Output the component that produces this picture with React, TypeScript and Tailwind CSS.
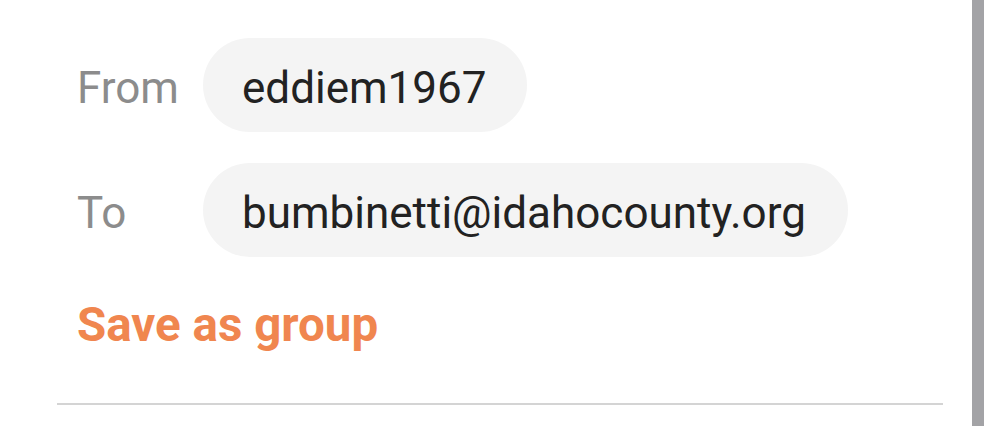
export default function App() {
  return (
    <div className="w-[1000px] h-[426px] bg-white flex overflow-hidden" style={{ fontFamily: 'Roboto, "Noto Sans", sans-serif' }}>
      <div className="w-[972px] flex flex-col pl-[57px] pr-[29px] pt-[38px]">
        <div className="pl-[20px] flex flex-col gap-[31px]">
          <div className="flex items-center">
            <span className="w-[126px] pt-[5px] text-[44px] text-[#8c8c8c]">From</span>
            <div className="h-[94px] rounded-full bg-[#f4f4f4] flex items-center pt-[5px] pl-[39px] pr-[40px] text-[44px] text-[#222222]">
              eddiem1967
            </div>
          </div>
          <div className="flex items-center">
            <span className="w-[126px] pt-[5px] text-[44px] text-[#8c8c8c]">To</span>
            <div className="h-[94px] rounded-full bg-[#f4f4f4] flex items-center pt-[5px] pl-[39px] pr-[42px] text-[44px] text-[#222222]">
              bumbinetti@idahocounty.org
            </div>
          </div>
        </div>
        <div className="pl-[20px] mt-[45px] text-[47.5px] font-bold text-[#f0864f] leading-none">Save as group</div>
        <div className="mt-[53px] h-[2px] bg-[#d4d4d4]" />
      </div>
      <div className="w-[12px] h-full bg-[#a3a3a6]" />
    </div>
  );
}
